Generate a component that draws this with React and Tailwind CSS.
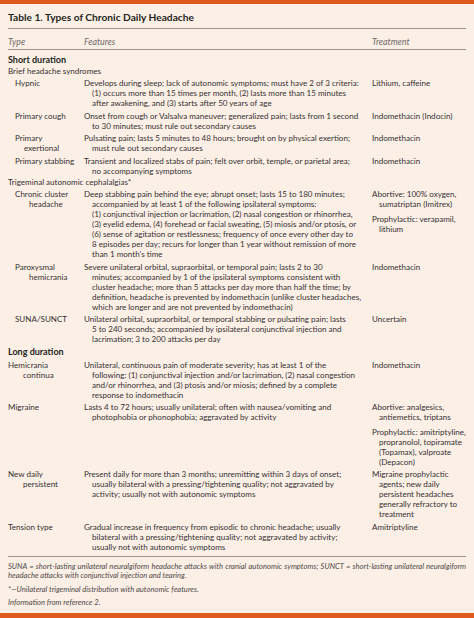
import React from 'react';

const FONT = { fontFamily: 'Lato, "Open Sans", "Liberation Sans", sans-serif' };

const sections = [
  {
    title: 'Short duration',
    groups: [
      {
        label: 'Brief headache syndromes',
        rows: [
          {
            type: [['Hypnic', 0]],
            features: [
              'Develops during sleep; lack of autonomic symptoms; must have 2 of 3 criteria:',
              '(1) occurs more than 15 times per month, (2) lasts more than 15 minutes',
              'after awakening, and (3) starts after 50 years of age',
            ],
            treatment: [['Lithium, caffeine']],
          },
          {
            type: [['Primary cough', 0]],
            features: [
              'Onset from cough or Valsalva maneuver; generalized pain; lasts from 1 second',
              'to 30 minutes; must rule out secondary causes',
            ],
            treatment: [['Indomethacin (Indocin)']],
          },
          {
            type: [['Primary', 0], ['exertional', 9]],
            features: [
              'Pulsating pain; lasts 5 minutes to 48 hours; brought on by physical exertion;',
              'must rule out secondary causes',
            ],
            treatment: [['Indomethacin']],
          },
          {
            type: [['Primary stabbing', 0]],
            features: [
              'Transient and localized stabs of pain; felt over orbit, temple, or parietal area;',
              'no accompanying symptoms',
            ],
            treatment: [['Indomethacin']],
          },
        ],
      },
      {
        label: 'Trigeminal autonomic cephalalgias*',
        rows: [
          {
            type: [['Chronic cluster', 0], ['headache', 14]],
            features: [
              'Deep stabbing pain behind the eye; abrupt onset; lasts 15 to 180 minutes;',
              'accompanied by at least 1 of the following ipsilateral symptoms:',
              '(1) conjunctival injection or lacrimation, (2) nasal congestion or rhinorrhea,',
              '(3) eyelid edema, (4) forehead or facial sweating, (5) miosis and/or ptosis, or',
              '(6) sense of agitation or restlessness; frequency of once every other day to',
              '8 episodes per day; recurs for longer than 1 year without remission of more',
              "than 1 month's time",
            ],
            treatment: [
              ['Abortive: 100% oxygen,', 'sumatriptan (Imitrex)'],
              ['Prophylactic: verapamil,', 'lithium'],
            ],
          },
          {
            type: [['Paroxysmal', 0], ['hemicrania', 14]],
            features: [
              'Severe unilateral orbital, supraorbital, or temporal pain; lasts 2 to 30',
              'minutes; accompanied by 1 of the ipsilateral symptoms consistent with',
              'cluster headache; more than 5 attacks per day more than half the time; by',
              'definition, headache is prevented by indomethacin (unlike cluster headaches,',
              'which are longer and are not prevented by indomethacin)',
            ],
            treatment: [['Indomethacin']],
          },
          {
            type: [['SUNA/SUNCT', 0]],
            features: [
              'Unilateral orbital, supraorbital, or temporal stabbing or pulsating pain; lasts',
              '5 to 240 seconds; accompanied by ipsilateral conjunctival injection and',
              'lacrimation; 3 to 200 attacks per day',
            ],
            treatment: [['Uncertain']],
          },
        ],
      },
    ],
  },
  {
    title: 'Long duration',
    groups: [
      {
        label: null,
        rows: [
          {
            type: [['Hemicrania', 0], ['continua', 15]],
            features: [
              'Unilateral, continuous pain of moderate severity; has at least 1 of the',
              'following: (1) conjunctival injection and/or lacrimation, (2) nasal congestion',
              'and/or rhinorrhea, and (3) ptosis and/or miosis; defined by a complete',
              'response to indomethacin',
            ],
            treatment: [['Indomethacin']],
          },
          {
            type: [['Migraine', 0]],
            features: [
              'Lasts 4 to 72 hours; usually unilateral; often with nausea/vomiting and',
              'photophobia or phonophobia; aggravated by activity',
            ],
            treatment: [
              ['Abortive: analgesics,', 'antiemetics, triptans'],
              ['Prophylactic: amitriptyline,', 'propranolol, topiramate', '(Topamax), valproate', '(Depacon)'],
            ],
          },
          {
            type: [['New daily', 0], ['persistent', 15]],
            features: [
              'Present daily for more than 3 months; unremitting within 3 days of onset;',
              'usually bilateral with a pressing/tightening quality; not aggravated by',
              'activity; usually not with autonomic symptoms',
            ],
            treatment: [['Migraine prophylactic', 'agents; new daily', 'persistent headaches', 'generally refractory to', 'treatment']],
          },
          {
            type: [['Tension type', 0]],
            features: [
              'Gradual increase in frequency from episodic to chronic headache; usually',
              'bilateral with a pressing/tightening quality; not aggravated by activity;',
              'usually not with autonomic symptoms',
            ],
            treatment: [['Amitriptyline']],
          },
        ],
      },
    ],
  },
];

function Lines({ lines, indent = 8 }) {
  return (
    <div>
      {lines.map((line, i) => (
        <div key={i} className="whitespace-nowrap" style={i > 0 ? { paddingLeft: indent } : undefined}>
          {line}
        </div>
      ))}
    </div>
  );
}

function Row({ row, nested }) {
  return (
    <div className="grid grid-cols-[76px_288px_1fr] pt-[2.5px]">
      <div className={nested ? 'pl-[7px]' : ''}>
        {row.type.map(([text, pad], i) => (
          <div key={i} className="whitespace-nowrap" style={pad ? { paddingLeft: pad } : undefined}>
            {text}
          </div>
        ))}
      </div>
      <Lines lines={row.features} />
      <div className="flex flex-col gap-[4.5px]">
        {row.treatment.map((block, i) => (
          <Lines key={i} lines={block} indent={7} />
        ))}
      </div>
    </div>
  );
}

export default function App() {
  return (
    <div className="w-[474px] h-[618px] bg-[#fcefe6] flex flex-col overflow-hidden" style={FONT}>
      <div className="h-[4px] bg-[#df5a1f]" />
      <div className="flex-1 px-[8px] text-[#353233]">
        <h1 className="pt-[5.7px] text-[10.2px] leading-[14px] font-bold text-[#231f20]">
          Table 1. Types of Chronic Daily Headache
        </h1>
        <div className="mt-[4.3px] border-t border-[#9b9592]" />
        <div className="grid grid-cols-[76px_288px_1fr] pt-[8.5px] pb-[1.5px] text-[8.8px] leading-[10px] italic text-[#6d6a69]">
          <div>Type</div>
          <div>Features</div>
          <div>Treatment</div>
        </div>
        <div className="border-t border-[#9b9592]" />
        <div className="text-[8.05px] leading-[10px] pt-[2px]">
          {sections.map((section) => (
            <div key={section.title}>
              <div className="pt-[3px] text-[9px] font-bold text-[#231f20]">{section.title}</div>
              {section.groups.map((group, gi) => (
                <div key={gi}>
                  {group.label && <div className="pt-[1px]">{group.label}</div>}
                  {group.rows.map((row, ri) => (
                    <Row key={ri} row={row} nested={!!group.label} />
                  ))}
                </div>
              ))}
            </div>
          ))}
        </div>
        <div className="mt-[4px] border-t border-[#9b9592]" />
        <div className="pt-[5.5px] text-[7.6px] leading-[8.5px] italic text-[#4d4a49]">
          <p className="text-justify [text-align-last:justify]">
            SUNA = short-lasting unilateral neuralgiform headache attacks with cranial autonomic symptoms; SUNCT = short-lasting unilateral neuralgiform
          </p>
          <p>headache attacks with conjunctival injection and tearing.</p>
          <p className="pt-[6px]">*—Unilateral trigeminal distribution with autonomic features.</p>
          <p className="pt-[4px]">Information from reference 2.</p>
        </div>
      </div>
      <div className="h-[5px] bg-[#df5a1f]" />
    </div>
  );
}
